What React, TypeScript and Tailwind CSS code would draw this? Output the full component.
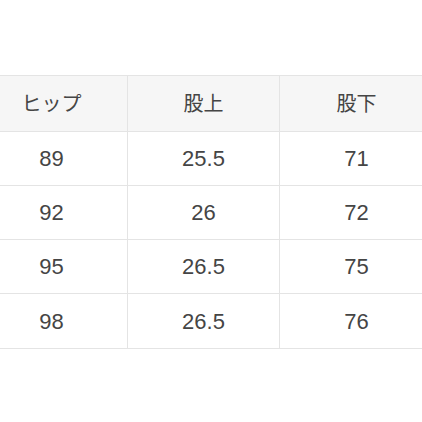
import React from "react";

const rows = [
  ["89", "25.5", "71"],
  ["92", "26", "72"],
  ["95", "26.5", "75"],
  ["98", "26.5", "76"],
];

export default function App() {
  return (
    <div
      className="w-[422px] h-[422px] overflow-hidden bg-white pt-[75px]"
      style={{ fontFamily: '"Liberation Sans", "Noto Sans CJK JP", sans-serif' }}
    >
      <div className="ml-[-24px] w-[457px] border-t border-b border-[#e4e4e4] text-[#454545]">
        <div className="grid grid-cols-[152px_152px_153px] h-[56px] bg-[#f6f6f6] border-b border-[#e4e4e4] text-[20px]">
          <div className="flex items-center justify-center border-r border-[#e4e4e4]">ヒップ</div>
          <div className="flex items-center justify-center border-r border-[#e4e4e4]">股上</div>
          <div className="flex items-center justify-center">股下</div>
        </div>
        {rows.map((r, i) => (
          <div
            key={i}
            className={
              "grid grid-cols-[152px_152px_153px] h-[54px] text-[22px] " +
              (i < rows.length - 1 ? "border-b border-[#e4e4e4]" : "")
            }
          >
            <div className="flex items-center justify-center border-r border-[#e4e4e4]">{r[0]}</div>
            <div className="flex items-center justify-center border-r border-[#e4e4e4]">{r[1]}</div>
            <div className="flex items-center justify-center">{r[2]}</div>
          </div>
        ))}
      </div>
    </div>
  );
}
